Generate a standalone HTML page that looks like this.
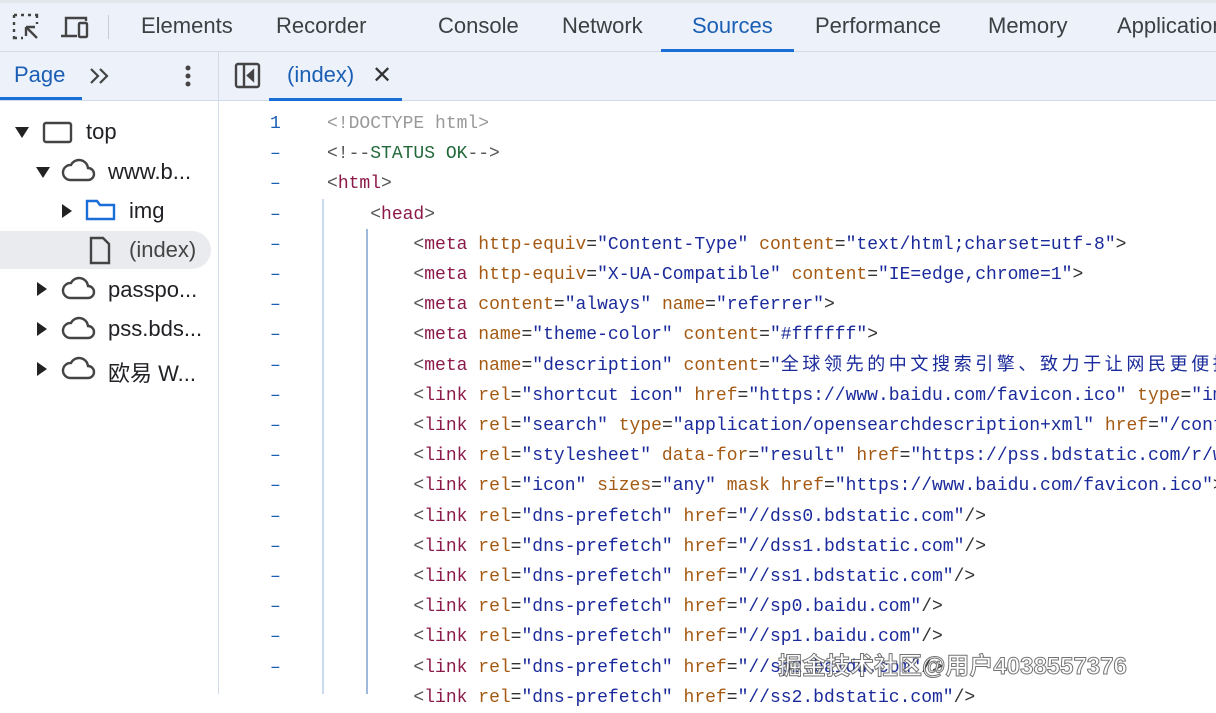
<!DOCTYPE html>
<html><head><meta charset="utf-8">
<style>
*{margin:0;padding:0;box-sizing:border-box}
body{width:1216px;height:694px;overflow:hidden;background:#fff;font-family:"Liberation Sans","Noto Sans CJK SC",sans-serif;position:relative;color:#333}
.top{position:absolute;left:0;top:0;width:1216px;height:52px;background:#edf2fa;border-top:3px solid #e3e6ea;border-bottom:1px solid #d3dbe8}
.tab{position:absolute;top:10px;font-size:22px;color:#3c4043;white-space:nowrap}
.sec{position:absolute;left:0;top:52px;width:1216px;height:49px;background:#edf2fa;border-bottom:1px solid #d3dbe8}
.vsep{position:absolute;left:218px;top:52px;width:1px;height:642px;background:#d3dbe8}
.tree{position:absolute;font-size:22px;color:#202124;white-space:nowrap}
.code{position:absolute;left:0;top:109px;font-family:"Liberation Mono","Noto Sans CJK SC",monospace;font-size:18px;line-height:30.2px;white-space:pre}
.ln{position:absolute;left:270px;width:30px;color:#1a5fb4;font-family:"Liberation Mono",monospace;font-size:18px}
.t{color:#8b1a4a}.a{color:#a55a14}.v{color:#1a2a9a}.p{color:#555}.c{color:#23683a}.g{color:#999}
.cj{letter-spacing:3.6px}
.guide{position:absolute;width:2px;background:#c9d9ef}
</style></head><body>
<div class="top">
 <svg style="position:absolute;left:12px;top:10px" width="28" height="28" viewBox="0 0 28 28" fill="none" stroke="#444" stroke-width="2.4"><path d="M2 2h3M9 2h3M16 2h3M23 2h2v3M2 2v3M2 9v3M2 16v3M2 23v2h3"/><path d="M25 9v2M9 25h2M14 14l11 11M14 14v9M14 14h9" /></svg>
 <svg style="position:absolute;left:60px;top:12px" width="32" height="26" viewBox="0 0 32 26" fill="none" stroke="#444" stroke-width="2.4"><path d="M6 20V3h20v3M1 21h16"/><rect x="19" y="8" width="8" height="14" rx="1"/></svg>
 <div style="position:absolute;left:108px;top:12px;width:1px;height:24px;background:#c8ccd2"></div>
 <div class="tab" style="left:141px">Elements</div>
 <div class="tab" style="left:276px">Recorder</div>
 <div class="tab" style="left:438px">Console</div>
 <div class="tab" style="left:562px">Network</div>
 <div class="tab" style="left:692px;color:#1a5fb4">Sources</div>
 <div style="position:absolute;left:661px;top:46px;width:133px;height:3px;background:#1a6ed8"></div>
 <div class="tab" style="left:815px">Performance</div>
 <div class="tab" style="left:988px">Memory</div>
 <div class="tab" style="left:1117px">Application</div>
</div>
<div class="sec">
 <div class="tab" style="left:14px;top:10px;color:#1a5fb4">Page</div>
 <svg style="position:absolute;left:89px;top:15px" width="22" height="18" fill="none" stroke="#444" stroke-width="2.2"><path d="M2 2l7 7-7 7M11 2l7 7-7 7"/></svg>
 <div style="position:absolute;left:0;top:45px;width:82px;height:3px;background:#1a6ed8"></div>
 <svg style="position:absolute;left:184px;top:12px" width="8" height="26"><circle cx="4" cy="4" r="2.5" fill="#444"/><circle cx="4" cy="12" r="2.5" fill="#444"/><circle cx="4" cy="20" r="2.5" fill="#444"/></svg>
 <svg style="position:absolute;left:234px;top:10px" width="28" height="28" viewBox="0 0 28 28" fill="none" stroke="#444" stroke-width="2.4"><rect x="2" y="2" width="23" height="23" rx="2"/><path d="M10 2v23"/><path d="M19 9l-5 4.5 5 4.5z" fill="#444"/></svg>
 <div class="tab" style="left:287px;top:10px;color:#1a5fb4">(index)</div>
 <div class="tab" style="left:372px;top:9px;font-size:24px;color:#333">&#x2715;</div>
 <div style="position:absolute;left:269px;top:46px;width:133px;height:3px;background:#1a6ed8"></div>
</div>
<div class="vsep"></div>
<div style="position:absolute;left:0;top:231px;width:211px;height:38px;background:#e9ebee;border-radius:0 19px 19px 0"></div>
<svg style="position:absolute;left:0;top:110px" width="218" height="280" fill="none" stroke="#444" stroke-width="2.4">
 <path d="M15 17h14l-7 11z" fill="#222" stroke="none"/>
 <rect x="44" y="13" width="27" height="19" rx="2"/>
 <path d="M36 57h14l-7 11z" fill="#222" stroke="none"/>
 <path d="M70 70h18a6 6 0 0 0 0-12a9 9 0 0 0-17-3a7 7 0 0 0-1 15z"/>
 <path d="M62 94v14l10-7z" fill="#222" stroke="none"/>
 <path d="M87 91h10l3 4h14v14h-27z" stroke="#1a6ed8"/>
 <path d="M91 128h12l6 6v19h-18z"/>
 <path d="M37 172v14l10-7z" fill="#222" stroke="none"/>
 <path d="M70 188h18a6 6 0 0 0 0-12a9 9 0 0 0-17-3a7 7 0 0 0-1 15z"/>
 <path d="M37 212v14l10-7z" fill="#222" stroke="none"/>
 <path d="M70 228h18a6 6 0 0 0 0-12a9 9 0 0 0-17-3a7 7 0 0 0-1 15z"/>
 <path d="M37 252v14l10-7z" fill="#222" stroke="none"/>
 <path d="M70 268h18a6 6 0 0 0 0-12a9 9 0 0 0-17-3a7 7 0 0 0-1 15z"/>
</svg>
<div class="tree" style="left:86px;top:119px">top</div>
<div class="tree" style="left:108px;top:159px">www.b...</div>
<div class="tree" style="left:129px;top:198px">img</div>
<div class="tree" style="left:129px;top:237px;color:#444">(index)</div>
<div class="tree" style="left:108px;top:277px">passpo...</div>
<div class="tree" style="left:108px;top:316px">pss.bds...</div>
<div class="tree" style="left:108px;top:356px">欧易 W...</div>
<div class="guide" style="left:322px;top:199px;height:495px"></div>
<div class="guide" style="left:366px;top:229px;height:465px;background:#9fb8dc"></div>
<div class="ln" style="top:109px;line-height:30.2px;white-space:pre">1
–
–
–
–
–
–
–
–
–
–
–
–
–
–
–
–
–
–</div>
<div class="code" style="left:327px"><span class="g">&lt;!DOCTYPE html&gt;</span>
<span class="p">&lt;!--</span><span class="c">STATUS OK</span><span class="p">--&gt;</span>
<span class="p">&lt;</span><span class="t">html</span><span class="p">&gt;</span>
    <span class="p">&lt;</span><span class="t">head</span><span class="p">&gt;</span>
        <span class="p">&lt;</span><span class="t">meta</span> <span class="a">http-equiv</span>=<span class="v">"Content-Type"</span> <span class="a">content</span>=<span class="v">"text/html;charset=utf-8"</span>&gt;
        <span class="p">&lt;</span><span class="t">meta</span> <span class="a">http-equiv</span>=<span class="v">"X-UA-Compatible"</span> <span class="a">content</span>=<span class="v">"IE=edge,chrome=1"</span>&gt;
        <span class="p">&lt;</span><span class="t">meta</span> <span class="a">content</span>=<span class="v">"always"</span> <span class="a">name</span>=<span class="v">"referrer"</span>&gt;
        <span class="p">&lt;</span><span class="t">meta</span> <span class="a">name</span>=<span class="v">"theme-color"</span> <span class="a">content</span>=<span class="v">"#ffffff"</span>&gt;
        <span class="p">&lt;</span><span class="t">meta</span> <span class="a">name</span>=<span class="v">"description"</span> <span class="a">content</span>=<span class="v">"<span class="cj">全球领先的中文搜索引擎、致力于让网民更便捷</span></span>
        <span class="p">&lt;</span><span class="t">link</span> <span class="a">rel</span>=<span class="v">"shortcut icon"</span> <span class="a">href</span>=<span class="v">"https://www.baidu.com/favicon.ico"</span> <span class="a">type</span>=<span class="v">"image</span>
        <span class="p">&lt;</span><span class="t">link</span> <span class="a">rel</span>=<span class="v">"search"</span> <span class="a">type</span>=<span class="v">"application/opensearchdescription+xml"</span> <span class="a">href</span>=<span class="v">"/content</span>
        <span class="p">&lt;</span><span class="t">link</span> <span class="a">rel</span>=<span class="v">"stylesheet"</span> <span class="a">data-for</span>=<span class="v">"result"</span> <span class="a">href</span>=<span class="v">"https://pss.bdstatic.com/r/www</span>
        <span class="p">&lt;</span><span class="t">link</span> <span class="a">rel</span>=<span class="v">"icon"</span> <span class="a">sizes</span>=<span class="v">"any"</span> <span class="a">mask</span> <span class="a">href</span>=<span class="v">"https://www.baidu.com/favicon.ico"</span>&gt;
        <span class="p">&lt;</span><span class="t">link</span> <span class="a">rel</span>=<span class="v">"dns-prefetch"</span> <span class="a">href</span>=<span class="v">"//dss0.bdstatic.com"</span>/&gt;
        <span class="p">&lt;</span><span class="t">link</span> <span class="a">rel</span>=<span class="v">"dns-prefetch"</span> <span class="a">href</span>=<span class="v">"//dss1.bdstatic.com"</span>/&gt;
        <span class="p">&lt;</span><span class="t">link</span> <span class="a">rel</span>=<span class="v">"dns-prefetch"</span> <span class="a">href</span>=<span class="v">"//ss1.bdstatic.com"</span>/&gt;
        <span class="p">&lt;</span><span class="t">link</span> <span class="a">rel</span>=<span class="v">"dns-prefetch"</span> <span class="a">href</span>=<span class="v">"//sp0.baidu.com"</span>/&gt;
        <span class="p">&lt;</span><span class="t">link</span> <span class="a">rel</span>=<span class="v">"dns-prefetch"</span> <span class="a">href</span>=<span class="v">"//sp1.baidu.com"</span>/&gt;
        <span class="p">&lt;</span><span class="t">link</span> <span class="a">rel</span>=<span class="v">"dns-prefetch"</span> <span class="a">href</span>=<span class="v">"//sp2.baidu.com"</span>/&gt;
        <span class="p">&lt;</span><span class="t">link</span> <span class="a">rel</span>=<span class="v">"dns-prefetch"</span> <span class="a">href</span>=<span class="v">"//ss2.bdstatic.com"</span>/&gt;</div>
<div style="position:absolute;left:778px;top:646px;font-size:24px;color:rgba(255,255,255,0.8);-webkit-text-stroke:1px rgba(80,80,80,0.8);font-weight:bold;white-space:nowrap">掘金技术社区@用户4038557376</div>
</body></html>
